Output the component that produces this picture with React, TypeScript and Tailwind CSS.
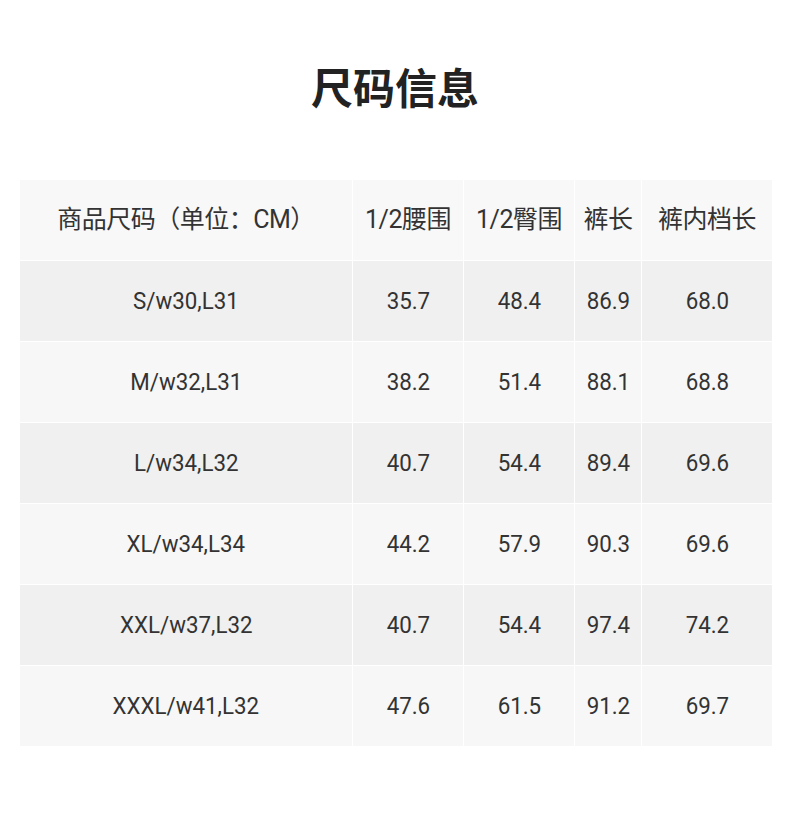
const headers = ["商品尺码（单位：CM）", "1/2腰围", "1/2臀围", "裤长", "裤内档长"];

const rows = [
  ["S/w30,L31", "35.7", "48.4", "86.9", "68.0"],
  ["M/w32,L31", "38.2", "51.4", "88.1", "68.8"],
  ["L/w34,L32", "40.7", "54.4", "89.4", "69.6"],
  ["XL/w34,L34", "44.2", "57.9", "90.3", "69.6"],
  ["XXL/w37,L32", "40.7", "54.4", "97.4", "74.2"],
  ["XXXL/w41,L32", "47.6", "61.5", "91.2", "69.7"],
];

export default function App() {
  return (
    <div
      className="w-[790px] h-[815px] bg-white text-[#333]"
      style={{ fontFamily: 'Roboto, "Noto Sans CJK SC", sans-serif' }}
    >
      <h1 className="pt-[62px] h-[180px] text-center text-[42px] font-bold leading-[56px] text-[#222]">
        尺码信息
      </h1>

      <div className="mx-[20px] grid grid-cols-[332px_110px_110px_66px_130px] gap-px bg-white">
        {headers.map((h, i) => (
          <div
            key={i}
            className="h-[80px] flex items-center justify-center bg-[#f8f8f8] text-[25px] tracking-[-0.5px] whitespace-nowrap"
          >
            {h}
          </div>
        ))}
        {rows.map((row, r) =>
          row.map((cell, c) => (
            <div
              key={`${r}-${c}`}
              className={`h-[80px] flex items-center justify-center text-[24px] ${
                r % 2 === 0 ? "bg-[#f0f0f0]" : "bg-[#f7f7f7]"
              }`}
            >
              <span className="inline-block scale-x-[0.93]">{cell}</span>
            </div>
          ))
        )}
      </div>
    </div>
  );
}
